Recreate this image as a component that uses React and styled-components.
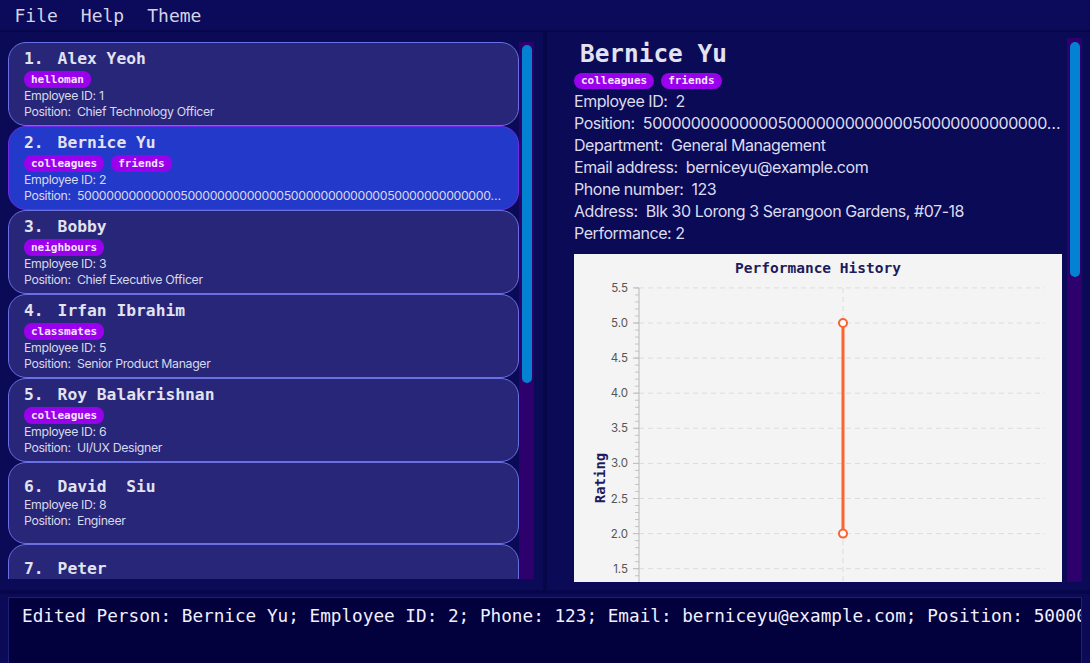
import React from "react";
import styled, { createGlobalStyle } from "styled-components";

const GlobalStyle = createGlobalStyle`
  html, body {
    margin: 0;
    padding: 0;
    background: #0b0a57;
  }
`;

const Window = styled.div`
  width: 1090px;
  height: 663px;
  display: flex;
  flex-direction: column;
  background: #0b0a57;
  overflow: hidden;
`;

const MenuBar = styled.div`
  height: 30px;
  display: flex;
  align-items: center;
  padding-left: 3px;
  background: #0c0a5a;
  border-bottom: 2px solid #07064a;
`;

const MenuItem = styled.span`
  font-family: "DejaVu Sans Mono", monospace;
  font-size: 18px;
  color: #d4d4e6;
  padding: 0 11.5px;
`;

const Main = styled.div`
  display: flex;
  height: 558px;
`;

const ListPanel = styled.div`
  width: 543px;
  box-sizing: border-box;
  padding: 10px 9px 11px 8px;
  display: flex;
`;

const Divider = styled.div`
  width: 4px;
  background: #07064a;
`;

const DetailPanel = styled.div`
  flex: 1;
  box-sizing: border-box;
  padding: 6px 8px 8px 27px;
  display: flex;
  gap: 5px;
`;

const ListViewport = styled.div`
  width: 511px;
  overflow: hidden;
  display: flex;
  flex-direction: column;
`;

const Track = styled.div`
  width: 15px;
  background: #2d006d;
  padding: ${(p) => p.$pad};
  box-sizing: border-box;
`;

const Thumb = styled.div`
  height: ${(p) => p.$h}px;
  background: #0482d2;
  border-radius: 5px;
`;

const Card = styled.div`
  flex: 0 0 ${(p) => (p.$tagged ? 84 : 82)}px;
  box-sizing: border-box;
  padding: 4px 15px;
  display: flex;
  flex-direction: column;
  justify-content: center;
  border-radius: 18px;
  border: 1.5px solid ${(p) => (p.$selected ? "#6d2cec" : "#6a6fe2")};
  background: ${(p) => (p.$selected ? "#2339c9" : "#272679")};
`;

const CardName = styled.div`
  display: flex;
  gap: 14px;
  font-family: "DejaVu Sans Mono", monospace;
  font-weight: bold;
  font-size: 16.3px;
  line-height: 20px;
  color: #e2e2f0;
  white-space: pre;
`;

const TagRow = styled.div`
  display: flex;
  flex-shrink: 0;
  gap: 7px;
  margin: ${(p) => p.$margin};
`;

const Tag = styled.span`
  font-family: "DejaVu Sans Mono", monospace;
  font-weight: bold;
  font-size: 11px;
  line-height: ${(p) => (p.$big ? 16 : 17)}px;
  padding: 0 7px;
  border-radius: 8px;
  background: #9a00ec;
  color: #f3e4ff;
`;

const CardLine = styled.div`
  font-family: Inter, "Liberation Sans", sans-serif;
  font-size: 12.3px;
  line-height: 16px;
  color: #d8d8ea;
  white-space: pre;
  overflow: hidden;
  text-overflow: ellipsis;
  letter-spacing: -0.35px;
`;

const DetailContent = styled.div`
  width: 488px;
  overflow: hidden;
  display: flex;
  flex-direction: column;
`;

const DetailName = styled.div`
  flex-shrink: 0;
  font-family: "DejaVu Sans Mono", monospace;
  font-weight: bold;
  font-size: 24.4px;
  line-height: 28px;
  padding: 2px 0 0 6px;
  color: #e2e2f0;
`;

const DetailLine = styled.div`
  flex-shrink: 0;
  font-family: Inter, "Liberation Sans", sans-serif;
  font-size: 16px;
  line-height: 22px;
  color: #dcdcee;
  white-space: pre;
  overflow: hidden;
  text-overflow: ellipsis;
  letter-spacing: -0.45px;
`;

const ChartBox = styled.div`
  flex: 0 0 328px;
  margin-top: 10px;
  background: #f4f4f4;
`;

const Bottom = styled.div`
  flex: 1;
  border-top: 4px solid #07064a;
  padding: 3px 8px 0;
  display: flex;
`;

const ResultBox = styled.div`
  flex: 1;
  background: #03003e;
  border: 1px solid #1f1f78;
  border-bottom: none;
  padding: 7px 13px;
  font-family: "DejaVu Sans Mono", monospace;
  font-size: 17.7px;
  line-height: 22px;
  color: #f0f0ff;
  white-space: pre;
  overflow: hidden;
`;

const LONG = "5" + "0000000000000" + ("5" + "0000000000000").repeat(8);

const people = [
  { n: 1, name: "Alex Yeoh", tags: ["helloman"], id: 1, pos: "Chief Technology Officer" },
  { n: 2, name: "Bernice Yu", tags: ["colleagues", "friends"], id: 2, pos: LONG, selected: true },
  { n: 3, name: "Bobby", tags: ["neighbours"], id: 3, pos: "Chief Executive Officer" },
  { n: 4, name: "Irfan Ibrahim", tags: ["classmates"], id: 5, pos: "Senior Product Manager" },
  { n: 5, name: "Roy Balakrishnan", tags: ["colleagues"], id: 6, pos: "UI/UX Designer" },
  { n: 6, name: "David  Siu", tags: [], id: 8, pos: "Engineer" },
  { n: 7, name: "Peter", tags: [], id: 9, pos: "Intern" },
];

const ORANGE = "#fa6430";
const AXIS_X = 65;
const yOf = (v) => 69 + (5 - v) * 70.2;

const Chart = () => {
  const minor = [];
  for (let i = 13; i <= 55; i++) minor.push(i / 10);
  const major = [1.5, 2, 2.5, 3, 3.5, 4, 4.5, 5, 5.5];
  return (
    <svg width="488" height="328" viewBox="0 0 488 328">
      <text
        x="244"
        y="19"
        textAnchor="middle"
        fontFamily="DejaVu Sans Mono, monospace"
        fontWeight="bold"
        fontSize="14.5"
        fill="#1c1c5c"
      >
        Performance History
      </text>
      <text
        x="0"
        y="0"
        transform="translate(31 224) rotate(-90)"
        textAnchor="middle"
        fontFamily="DejaVu Sans Mono, monospace"
        fontWeight="bold"
        fontSize="14"
        fill="#1c1c5c"
      >
        Rating
      </text>
      {major.map((v) => (
        <g key={v}>
          <line x1={AXIS_X} x2="471" y1={yOf(v)} y2={yOf(v)} stroke="#dcdcdc" strokeDasharray="5 4" />
          <line x1={AXIS_X - 6} x2={AXIS_X} y1={yOf(v)} y2={yOf(v)} stroke="#b8b8b8" />
          <text
            x={AXIS_X - 11}
            y={yOf(v) + 4}
            textAnchor="end"
            fontFamily="Inter, Liberation Sans, sans-serif"
            fontSize="11.5"
            fill="#555"
          >
            {v.toFixed(1)}
          </text>
        </g>
      ))}
      {minor.map((v) => (
        <line key={v} x1={AXIS_X - 4} x2={AXIS_X} y1={yOf(v)} y2={yOf(v)} stroke="#c4c4c4" />
      ))}
      <line x1="269" x2="269" y1="34" y2="328" stroke="#dcdcdc" strokeDasharray="5 4" />
      <line x1={AXIS_X} x2={AXIS_X} y1="34" y2="328" stroke="#b8b8b8" />
      <line x1="269" x2="269" y1={yOf(5)} y2={yOf(2)} stroke={ORANGE} strokeWidth="3" />
      <circle cx="269" cy={yOf(5)} r="4" fill="#fff" stroke={ORANGE} strokeWidth="2" />
      <circle cx="269" cy={yOf(2)} r="4" fill="#fff" stroke={ORANGE} strokeWidth="2" />
    </svg>
  );
};

const App = () => (
  <Window>
    <GlobalStyle />
    <MenuBar>
      <MenuItem>File</MenuItem>
      <MenuItem>Help</MenuItem>
      <MenuItem>Theme</MenuItem>
    </MenuBar>
    <Main>
      <ListPanel>
        <ListViewport>
          {people.map((p) => (
            <Card key={p.n} $selected={p.selected} $tagged={p.tags.length > 0}>
              <CardName>
                <span>{`${p.n}.`}</span>
                <span>{p.name}</span>
              </CardName>
              {p.tags.length > 0 && (
                <TagRow $margin="2px 0 0">
                  {p.tags.map((t) => (
                    <Tag key={t}>{t}</Tag>
                  ))}
                </TagRow>
              )}
              <CardLine>{`Employee ID: ${p.id}`}</CardLine>
              <CardLine>{`Position:  ${p.pos}`}</CardLine>
            </Card>
          ))}
        </ListViewport>
        <Track $pad="3px 2px 0 3px">
          <Thumb $h={338} />
        </Track>
      </ListPanel>
      <Divider />
      <DetailPanel>
        <DetailContent>
          <DetailName>Bernice Yu</DetailName>
          <TagRow $margin="5px 0 1px">
            <Tag $big>colleagues</Tag>
            <Tag $big>friends</Tag>
          </TagRow>
          <DetailLine>Employee ID:  2</DetailLine>
          <DetailLine>{`Position:  ${LONG}`}</DetailLine>
          <DetailLine>Department:  General Management</DetailLine>
          <DetailLine>Email address:  berniceyu@example.com</DetailLine>
          <DetailLine>Phone number:  123</DetailLine>
          <DetailLine>Address:  Blk 30 Lorong 3 Serangoon Gardens, #07-18</DetailLine>
          <DetailLine>Performance: 2</DetailLine>
          <ChartBox>
            <Chart />
          </ChartBox>
        </DetailContent>
        <Track $pad="4px 2px 0 3px">
          <Thumb $h={235} />
        </Track>
      </DetailPanel>
    </Main>
    <Bottom>
      <ResultBox>
        Edited Person: Bernice Yu; Employee ID: 2; Phone: 123; Email: berniceyu@example.com; Position: 5000000000000050000000000000
      </ResultBox>
    </Bottom>
  </Window>
);

export default App;
